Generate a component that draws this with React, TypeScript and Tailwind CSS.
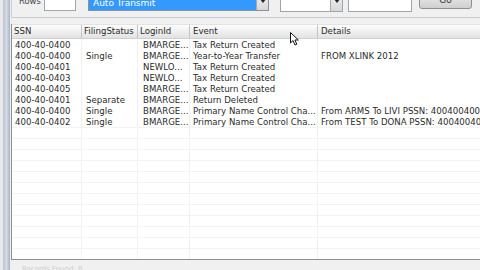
import React from "react";

interface Registro {
  ssn: string;
  filing: string;
  login: string;
  event: string;
  details: string;
}

const registros: Registro[] = [
  { ssn: "400-40-0400", filing: "", login: "BMARGE...", event: "Tax Return Created", details: "" },
  { ssn: "400-40-0400", filing: "Single", login: "BMARGE...", event: "Year-to-Year Transfer", details: "FROM XLINK 2012" },
  { ssn: "400-40-0401", filing: "", login: "NEWLO...", event: "Tax Return Created", details: "" },
  { ssn: "400-40-0403", filing: "", login: "NEWLO...", event: "Tax Return Created", details: "" },
  { ssn: "400-40-0405", filing: "", login: "BMARGE...", event: "Tax Return Created", details: "" },
  { ssn: "400-40-0401", filing: "Separate", login: "BMARGE...", event: "Return Deleted", details: "" },
  { ssn: "400-40-0400", filing: "Single", login: "BMARGE...", event: "Primary Name Control Cha...", details: "From ARMS To LIVI PSSN: 400400400" },
  { ssn: "400-40-0402", filing: "Single", login: "BMARGE...", event: "Primary Name Control Cha...", details: "From TEST To DONA PSSN: 400400400" },
];

const vacias = Array.from({ length: 12 }, (_, i) => i);

const gridCols = "grid grid-cols-[70px_56px_52px_128px_200px]";

const Arrow = () => (
  <div className="w-[12px] h-full flex items-center justify-center bg-gradient-to-b from-[#f4f4f4] to-[#d8d8d8] border-l border-[#a9a9a9]">
    <svg width="6" height="4" viewBox="0 0 6 4">
      <path d="M0 0 L6 0 L3 4 Z" fill="#222" />
    </svg>
  </div>
);

const App: React.FC = () => {
  return (
    <div
      className="relative w-[480px] h-[270px] overflow-hidden bg-[#f0f0f0] flex text-[8.6px] text-[#2b2b2b]"
      style={{ fontFamily: '"DejaVu Sans", Verdana, sans-serif' }}
    >
      {/* borde izquierdo de la ventana */}
      <div className="w-[10px] h-full flex">
        <div className="w-[3px] h-full bg-[#e8eaee]" />
        <div className="w-[7px] h-full bg-gradient-to-r from-[#b9c3cf] via-[#d5dce5] to-[#aab4c1]" />
      </div>

      <div className="flex-1 flex flex-col min-w-0">
        {/* panel de filtros */}
        <div className="h-[18px] border-l border-b border-[#c9ced4] ml-[1px] overflow-hidden">
          <div className="-mt-[10px] flex items-start h-[21px]">
            <span className="ml-[7px] mt-[5px] w-[25px] text-[8.4px] text-[#444]">Rows</span>
            <div className="w-[32px] h-[21px] bg-white border border-[#a0a6ad]" />
            <div className="ml-[12px] w-[181px] h-[21px] flex border border-[#8a9098] bg-[#3399ff]">
              <span className="flex-1 pl-[4px] pt-[6px] text-white text-[9px]">Auto Transmit</span>
              <Arrow />
            </div>
            <div className="ml-[11px] w-[63px] h-[22px] flex border border-[#a0a6ad] bg-white">
              <span className="flex-1" />
              <Arrow />
            </div>
            <div className="ml-[5px] w-[64px] h-[22px] bg-white border border-[#a0a6ad]" />
            <div className="ml-[7px] w-[53px] h-[19px] rounded-[3px] border border-[#8e8f8f] bg-gradient-to-b from-[#f2f2f2] to-[#cfcfcf] flex items-end justify-center pb-[3px] leading-none text-[9px] text-[#333]">
              Go
            </div>
          </div>
        </div>

        <div className="h-[6px]" />

        {/* tabla */}
        <div className="h-[236px] ml-[1px] border-l border-b border-[#8c9096] bg-white overflow-hidden">
          <div className={`${gridCols} h-[15px] border-t border-[#e3e3e3] bg-gradient-to-b from-[#fdfdfd] to-[#e2e2e2] border-b border-b-[#d0d0d0]`}>
            <div className="pl-[2px] flex items-center border-r border-[#c4c4c4]">SSN</div>
            <div className="pl-[2px] flex items-center border-r border-[#c4c4c4]">FilingStatus</div>
            <div className="pl-[2px] flex items-center border-r border-[#c4c4c4]">LoginId</div>
            <div className="pl-[3px] flex items-center border-r border-[#c4c4c4]">Event</div>
            <div className="pl-[3px] flex items-center">Details</div>
          </div>
          {registros.map((r, i) => (
            <div key={i} className={`${gridCols} h-[11px] leading-[12px] whitespace-nowrap`}>
              <div className="pl-[3px] border-r border-[#f1f1f1]">{r.ssn}</div>
              <div className="pl-[4px] border-r border-[#f1f1f1]">{r.filing}</div>
              <div className="pl-[5px] border-r border-[#f1f1f1]">{r.login}</div>
              <div className="pl-[3px] border-r border-[#f1f1f1] overflow-hidden">{r.event}</div>
              <div className="pl-[3px] overflow-hidden">{r.details}</div>
            </div>
          ))}
          {vacias.map((i) => (
            <div key={i} className={`${gridCols} h-[11px] border-t border-[#f3f3f3]`}>
              <div className="border-r border-[#f1f1f1]" />
              <div className="border-r border-[#f1f1f1]" />
              <div className="border-r border-[#f1f1f1]" />
              <div className="border-r border-[#f1f1f1]" />
              <div />
            </div>
          ))}
        </div>

        {/* barra de estado */}
        <div className="flex-1 flex items-end pl-[12px] text-[#cfcfcf] text-[7px] leading-[7px] overflow-hidden">
          <span className="-mb-[3px]">Records Found: 8</span>
        </div>
      </div>

      {/* puntero del ratón */}
      <svg className="absolute left-[290px] top-[32px]" width="10" height="14" viewBox="0 0 10 14">
        <path d="M0.5 0.5 L0.5 11 L3 8.6 L5 13 L6.8 12.2 L4.9 8 L8.3 8 Z" fill="#fff" stroke="#111" strokeWidth="1" strokeLinejoin="round" />
      </svg>
    </div>
  );
};

export default App;
